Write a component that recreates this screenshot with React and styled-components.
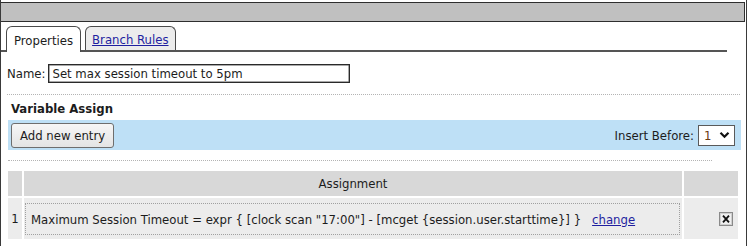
import React from "react";
import styled, { createGlobalStyle } from "styled-components";

const GlobalStyle = createGlobalStyle`
  html, body {
    margin: 0;
    padding: 0;
    background: #ffffff;
  }
  body {
    font-family: "DejaVu Sans Condensed", "DejaVu Sans", sans-serif;
    font-size: 13px;
    color: #1c1c1c;
  }
`;

const Window = styled.div`
  width: 747px;
  height: 246px;
  box-sizing: border-box;
  padding-top: 2px;
  border-left: 1px solid #3a3a3a;
  border-right: 1px solid #3a3a3a;
  overflow: hidden;
`;

const TitleBar = styled.div`
  height: 20px;
  box-sizing: border-box;
  margin-left: -1px;
  margin-right: 1px;
  background: #c0c0c0;
  border: 1px solid #2e2e2e;
`;

const TabStrip = styled.div`
  display: flex;
  align-items: flex-end;
  gap: 4px;
  margin: 4px 19px 0 0;
  padding-left: 5px;
  border-bottom: 2px solid #555555;
`;

const Tab = styled.div`
  height: ${(p) => (p.$active ? "24px" : "22px")};
  margin-bottom: ${(p) => (p.$active ? "-2px" : "0")};
  box-sizing: content-box;
  padding: 0 ${(p) => (p.$active ? "7px" : "6px")};
  display: flex;
  align-items: center;
  padding-top: 1px;
  background: ${(p) => (p.$active ? "#ffffff" : "#ececec")};
  border: 1px solid #4a4a4a;
  border-bottom: none;
  border-radius: 6px 6px 0 0;
  color: ${(p) => (p.$active ? "#1c1c1c" : "#1f1fa0")};
  text-decoration: ${(p) => (p.$active ? "none" : "underline")};
  white-space: nowrap;
`;

const NameRow = styled.div`
  display: flex;
  align-items: center;
  gap: 3px;
  margin-top: 12px;
  padding-left: 6px;
`;

const NameInput = styled.div`
  width: 302px;
  height: 19px;
  box-sizing: border-box;
  border: 1px solid #2a2a2a;
  box-shadow: inset 0 0 0 0.5px #555;
  padding-left: 3px;
  display: flex;
  align-items: center;
`;

const Dotted = styled.div`
  margin: ${(p) => p.$margin};
  border-top: 1px dotted #b4b4b4;
`;

const SectionTitle = styled.div`
  font-weight: bold;
  margin: 6px 0 0 10px;
  line-height: 15px;
`;

const ToolBar = styled.div`
  display: flex;
  align-items: center;
  justify-content: space-between;
  height: 30px;
  box-sizing: border-box;
  margin: 4px 5px 0 7px;
  padding: 0 6px 0 3px;
  background: #bee0f6;
`;

const Button = styled.div`
  height: 25px;
  box-sizing: border-box;
  padding: 0 8px;
  display: flex;
  align-items: center;
  background: linear-gradient(#f6f6f6, #e4e4e4);
  border: 1px solid #6e6e6e;
  border-radius: 3px;
`;

const InsertGroup = styled.div`
  display: flex;
  align-items: center;
  gap: 4px;
`;

const SelectBox = styled.div`
  width: 37px;
  height: 21px;
  box-sizing: border-box;
  display: flex;
  align-items: center;
  justify-content: space-between;
  padding: 0 4px 0 5px;
  background: #ffffff;
  border: 1px solid #5a5a5a;
  color: #6b3a10;
`;

const Table = styled.div`
  display: grid;
  grid-template-columns: 14px 658px 54px;
  grid-template-rows: 25px 41px;
  gap: 2px;
  margin: 10px 0 0 7px;
`;

const HeadCell = styled.div`
  background: #d8d8d8;
  display: flex;
  align-items: center;
  justify-content: center;
`;

const Cell = styled.div`
  background: #ececec;
  display: flex;
  align-items: center;
  justify-content: ${(p) => p.$align || "flex-start"};
  padding: ${(p) => p.$pad || "0"};
`;

const ValueBox = styled.div`
  flex: 1;
  align-self: stretch;
  display: flex;
  align-items: center;
  padding-left: 5px;
  border: 1px dotted #a0a0a0;
  white-space: nowrap;
`;

const Link = styled.span`
  color: #1f1fa0;
  text-decoration: underline;
  margin-left: 11px;
`;

const Chevron = () => (
  <svg width="11" height="8" viewBox="0 0 11 8">
    <path d="M1.5 1.8 L5.5 5.8 L9.5 1.8" fill="none" stroke="#111" strokeWidth="2.2" />
  </svg>
);

const DeleteIcon = () => (
  <svg width="14" height="14" viewBox="0 0 14 14">
    <rect x="0.5" y="0.5" width="13" height="13" fill="#f0f0f0" stroke="#8a8a8a" />
    <rect x="1.5" y="1.5" width="11" height="11" fill="none" stroke="#d0d0d0" />
    <path d="M4 3.6 L10 10.4 M10 3.6 L4 10.4" stroke="#111" strokeWidth="1.8" />
  </svg>
);

export default function App() {
  return (
    <>
      <GlobalStyle />
      <Window>
        <TitleBar />
        <TabStrip>
          <Tab $active>Properties</Tab>
          <Tab>Branch Rules</Tab>
        </TabStrip>
        <NameRow>
          <span>Name:</span>
          <NameInput>Set max session timeout to 5pm</NameInput>
        </NameRow>
        <Dotted $margin="11px 6px 0 6px" />
        <SectionTitle>Variable Assign</SectionTitle>
        <ToolBar>
          <Button>Add new entry</Button>
          <InsertGroup>
            <span>Insert Before:</span>
            <SelectBox>
              1
              <Chevron />
            </SelectBox>
          </InsertGroup>
        </ToolBar>
        <Dotted $margin="10px 34px 0 7px" />
        <Table>
          <HeadCell />
          <HeadCell>Assignment</HeadCell>
          <HeadCell />
          <Cell $align="center">1</Cell>
          <Cell $pad="5px 2px 4px 1px">
            <ValueBox>
              Maximum Session Timeout = expr {"{"} [clock scan "17:00"] - [mcget {"{session.user.starttime}"}] {"}"}
              <Link>change</Link>
            </ValueBox>
          </Cell>
          <Cell $align="flex-end" $pad="0 5px 0 0">
            <DeleteIcon />
          </Cell>
        </Table>
      </Window>
    </>
  );
}
